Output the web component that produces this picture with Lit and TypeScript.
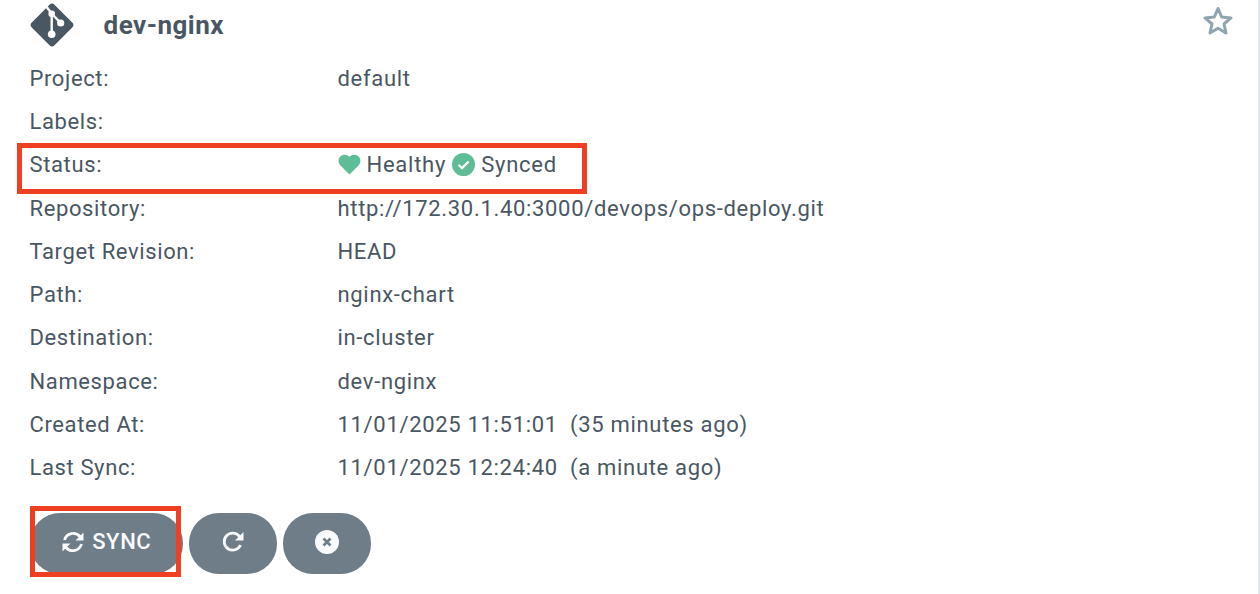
import { LitElement, html, css } from "lit";
import { customElement } from "lit/decorators.js";

const ROWS: [string, string][] = [
  ["Project:", "default"],
  ["Labels:", ""],
  ["Status:", "__status"],
  ["Repository:", "http://172.30.1.40:3000/devops/ops-deploy.git"],
  ["Target Revision:", "HEAD"],
  ["Path:", "nginx-chart"],
  ["Destination:", "in-cluster"],
  ["Namespace:", "dev-nginx"],
  ["Created At:", "11/01/2025 11:51:01  (35 minutes ago)"],
  ["Last Sync:", "11/01/2025 12:24:40  (a minute ago)"],
];

@customElement("app-root")
class AppRoot extends LitElement {
  static styles = css`
    :host {
      display: block;
      width: 1260px;
      height: 594px;
      background: #fff;
      color: #495763;
      font-family: Roboto, "Liberation Sans", sans-serif;
      font-size: 22px;
      letter-spacing: 0.62px;
      overflow: hidden;
    }

    * {
      box-sizing: border-box;
    }

    .card {
      position: relative;
      height: 594px;
      padding: 0 2px 0 29.5px;
      border-right: 2px solid #e6e9ec;
    }

    .header {
      display: flex;
      align-items: center;
      height: 56.5px;
      padding-bottom: 7px;
    }

    .logo {
      width: 44px;
      height: 44px;
      margin-right: 30px;
      flex: none;
    }

    .title {
      font-size: 26px;
      font-weight: 700;
      letter-spacing: 0.5px;
      flex: 1;
    }

    .star {
      width: 32px;
      height: 32px;
      margin-right: 22px;
      margin-top: -7px;
    }

    .row {
      display: grid;
      grid-template-columns: 308px 1fr;
      align-items: center;
      height: 43.3px;
      white-space: pre;
    }

    .value {
      letter-spacing: 0.68px;
    }

    .status {
      display: flex;
      align-items: center;
      letter-spacing: 0.75px;
    }

    .status svg {
      width: 23px;
      height: 23px;
      margin-right: 6px;
      flex: none;
    }

    .status span {
      margin-right: 6px;
    }

    .actions {
      display: flex;
      gap: 6px;
      margin-top: 24px;
    }

    .btn {
      display: flex;
      align-items: center;
      justify-content: center;
      gap: 7px;
      width: 88px;
      height: 61px;
      padding-bottom: 4px;
      border-radius: 30px;
      background: #6f7d89;
      color: #f8fafb;
      font-size: 22px;
      font-weight: 500;
      letter-spacing: 0.6px;
    }

    .btn.sync {
      width: 153.5px;
    }

    .btn svg {
      width: 24px;
      height: 24px;
    }

    .mark {
      position: absolute;
      border: 5px solid #ee3f23;
    }

    .mark.one {
      left: 17px;
      top: 143px;
      width: 570px;
      height: 51px;
    }

    .mark.two {
      left: 30px;
      top: 506px;
      width: 151px;
      height: 71px;
    }
  `;

  private renderStatus() {
    return html`<div class="status">
      <svg viewBox="0 0 24 24">
        <path
          fill="#5ebd97"
          d="M12 22.5 2.6 13C-.2 10.100.1 6 2.400 3.700 5.200 1 9.500 1.300 12 4.300 14.500 1.300 18.800 1 21.600 3.700 23.900 6 24.200 10.100 21.400 13Z"
        />
      </svg>
      <span>Healthy</span>
      <svg viewBox="0 0 24 24">
        <circle cx="12" cy="12" r="12" fill="#5ebd97" />
        <path
          d="M6.800 12.300 10.400 15.800 17.300 9"
          fill="none"
          stroke="#fff"
          stroke-width="2.400"
        />
      </svg>
      <span>Synced</span>
    </div>`;
  }

  render() {
    return html`
      <div class="card">
        <div class="header">
          <svg class="logo" viewBox="0 0 44 44">
            <path
              fill="#495763"
              d="M19.500 1.800 1.800 19.500a3.500 3.500 0 0 0 0 5L19.500 42.200a3.500 3.500 0 0 0 5 0L42.200 24.500a3.500 3.500 0 0 0 0-5L24.500 1.800a3.500 3.500 0 0 0-5 0Z"
            />
            <path
              d="M16.700 4 21.700 10.700V31M21.700 10.700 30.700 20"
              fill="none"
              stroke="#fff"
              stroke-width="2.400"
            />
            <circle cx="21.700" cy="10.700" r="3.300" fill="#fff" />
            <circle cx="30.700" cy="20" r="3.600" fill="#fff" />
            <circle cx="21.700" cy="31.300" r="3.800" fill="#fff" />
          </svg>
          <div class="title">dev-nginx</div>
          <svg class="star" viewBox="0 0 32 32">
            <path
              d="M16 3.500 19.700 12 29 12.900 22 19 24 28 16 23.300 8 28 10 19 3 12.900 12.300 12Z"
              fill="none"
              stroke="#8fa4b1"
              stroke-width="3"
              stroke-linejoin="round"
            />
          </svg>
        </div>
        ${ROWS.map(
          ([label, value]) => html`<div class="row">
            <div>${label}</div>
            ${value === "__status"
              ? this.renderStatus()
              : html`<div class="value">${value}</div>`}
          </div>`
        )}
        <div class="actions">
          <div class="btn sync">
            <svg viewBox="0 0 24 24">
              <path
                d="M3.500 10A9 9 0 0 1 19 6.500L21 9M20.500 14A9 9 0 0 1 5 17.500L3 15"
                fill="none"
                stroke="#f8fafb"
                stroke-width="2.800"
              />
              <path d="M22.500 2.500V10.500H14.500Z M1.500 21.500V13.500H9.500Z" fill="#f8fafb" />
            </svg>
            SYNC
          </div>
          <div class="btn">
            <svg viewBox="0 0 24 24">
              <path
                d="M19.500 15A8.500 8.500 0 1 1 18.500 6.500L21 9"
                fill="none"
                stroke="#f8fafb"
                stroke-width="2.800"
              />
              <path d="M22.500 2V10.500H14Z" fill="#f8fafb" />
            </svg>
          </div>
          <div class="btn">
            <svg viewBox="0 0 24 24">
              <circle cx="12" cy="12" r="12" fill="#f8fafb" />
              <path
                d="M8.500 8.500 15.500 15.500M15.500 8.500 8.500 15.500"
                stroke="#6f7d89"
                stroke-width="2.600"
              />
            </svg>
          </div>
        </div>
        <div class="mark one"></div>
        <div class="mark two"></div>
      </div>
    `;
  }
}

export { AppRoot };
